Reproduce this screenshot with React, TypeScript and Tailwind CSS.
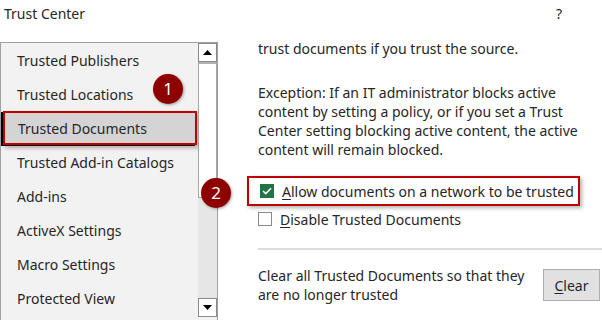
import React from 'react';

const items = [
  'Trusted Publishers',
  'Trusted Locations',
  'Trusted Documents',
  'Trusted Add-in Catalogs',
  'Add-ins',
  'ActiveX Settings',
  'Macro Settings',
  'Protected View',
];

function Badge({ n, className }: { n: string; className: string }) {
  return (
    <div
      className={`absolute w-[30px] h-[30px] rounded-full bg-[#8e0000] text-white text-[17px] flex items-center justify-center shadow-[1px_1px_3px_rgba(0,0,0,0.35)] ${className}`}
    >
      {n}
    </div>
  );
}

export default function App() {
  return (
    <div className="relative w-[602px] h-[320px] overflow-hidden bg-white text-[#262626] font-['Noto_Sans',sans-serif] text-[14px]">
      {/* Title bar */}
      <div className="h-[42px] flex justify-between pl-[4px] pr-[40px] pt-[4px]">
        <span className="text-[14px] leading-[20px]">Trust Center</span>
        <span className="text-[14px] leading-[20px]">?</span>
      </div>

      <div className="flex">
        {/* Left navigation list */}
        <div className="w-[218px] h-[280px] flex border border-[#a0a0a0] bg-[#f2f2f2]">
          <ul className="flex-1">
            {items.map((label) => (
              <li
                key={label}
                className={
                  label === 'Trusted Documents'
                    ? 'h-[34px] ml-[2px] mr-[1px] pl-[13px] flex items-center bg-[#d4d4d4] border-2 border-[#c00000] shadow-[-2px_1px_0_#000,2px_3px_4px_rgba(0,0,0,0.3)]'
                    : 'h-[34px] pl-[16px] flex items-center'
                }
              >
                {label}
              </li>
            ))}
          </ul>
          {/* Scrollbar */}
          <div className="w-[19px] flex flex-col">
            <div className="h-[19px] bg-white border border-[#8a8a8a] flex items-center justify-center">
              <svg width="9" height="5" viewBox="0 0 9 5">
                <path d="M0 5 L4.5 0 L9 5 Z" fill="#000" />
              </svg>
            </div>
            <div className="h-[136px] bg-white border border-[#a6a6a6] border-t-2 border-t-[#b0b0b0]" />
            <div className="flex-1 bg-[#e6e6e6]" />
            <div className="h-[19px] bg-white border border-[#8a8a8a] flex items-center justify-center">
              <svg width="9" height="5" viewBox="0 0 9 5">
                <path d="M0 0 L9 0 L4.5 5 Z" fill="#000" />
              </svg>
            </div>
            <div className="h-[4px]" />
          </div>
        </div>

        {/* Right content */}
        <div className="flex-1 pl-[40px] leading-[19px]">
          <p className="mt-[-3px]">trust documents if you trust the source.</p>
          <p className="mt-[25px] pr-[20px]">
            Exception: If an IT administrator blocks active content by setting a policy, or if you set a Trust
            Center setting blocking active content, the active content will remain blocked.
          </p>

          <div className="mt-[17px] -ml-[11px] w-[333px] h-[30px] pl-[11px] flex items-center gap-[8px] border-2 border-[#c00000] shadow-[2px_2px_4px_rgba(0,0,0,0.3)]">
            <span className="w-[14px] h-[14px] bg-[#217346] flex items-center justify-center">
              <svg width="10" height="8" viewBox="0 0 10 8">
                <path d="M1 4 L3.8 6.6 L9 1.2" stroke="#fff" strokeWidth="1.6" fill="none" />
              </svg>
            </span>
            <span>
              <span className="underline underline-offset-2">A</span>llow documents on a network to be trusted
            </span>
          </div>

          <div className="mt-[3px] h-[20px] flex items-center gap-[8px]">
            <span className="w-[14px] h-[14px] bg-white border border-[#8a8a8a]" />
            <span>
              <span className="underline underline-offset-2">D</span>isable Trusted Documents
            </span>
          </div>

          <div className="mt-[19px] h-[2px] bg-[#dcdcdc]" />

          <div className="mt-[16px] flex items-center justify-between pr-[2px]">
            <p className="w-[270px]">Clear all Trusted Documents so that they are no longer trusted</p>
            <button className="w-[57px] h-[32px] bg-[#e1e1e1] border border-[#adadad] text-[14px]">
              <span className="underline underline-offset-2">C</span>lear
            </button>
          </div>
        </div>
      </div>

      <Badge n="1" className="left-[153px] top-[74px]" />
      <Badge n="2" className="left-[201px] top-[178px]" />
    </div>
  );
}
